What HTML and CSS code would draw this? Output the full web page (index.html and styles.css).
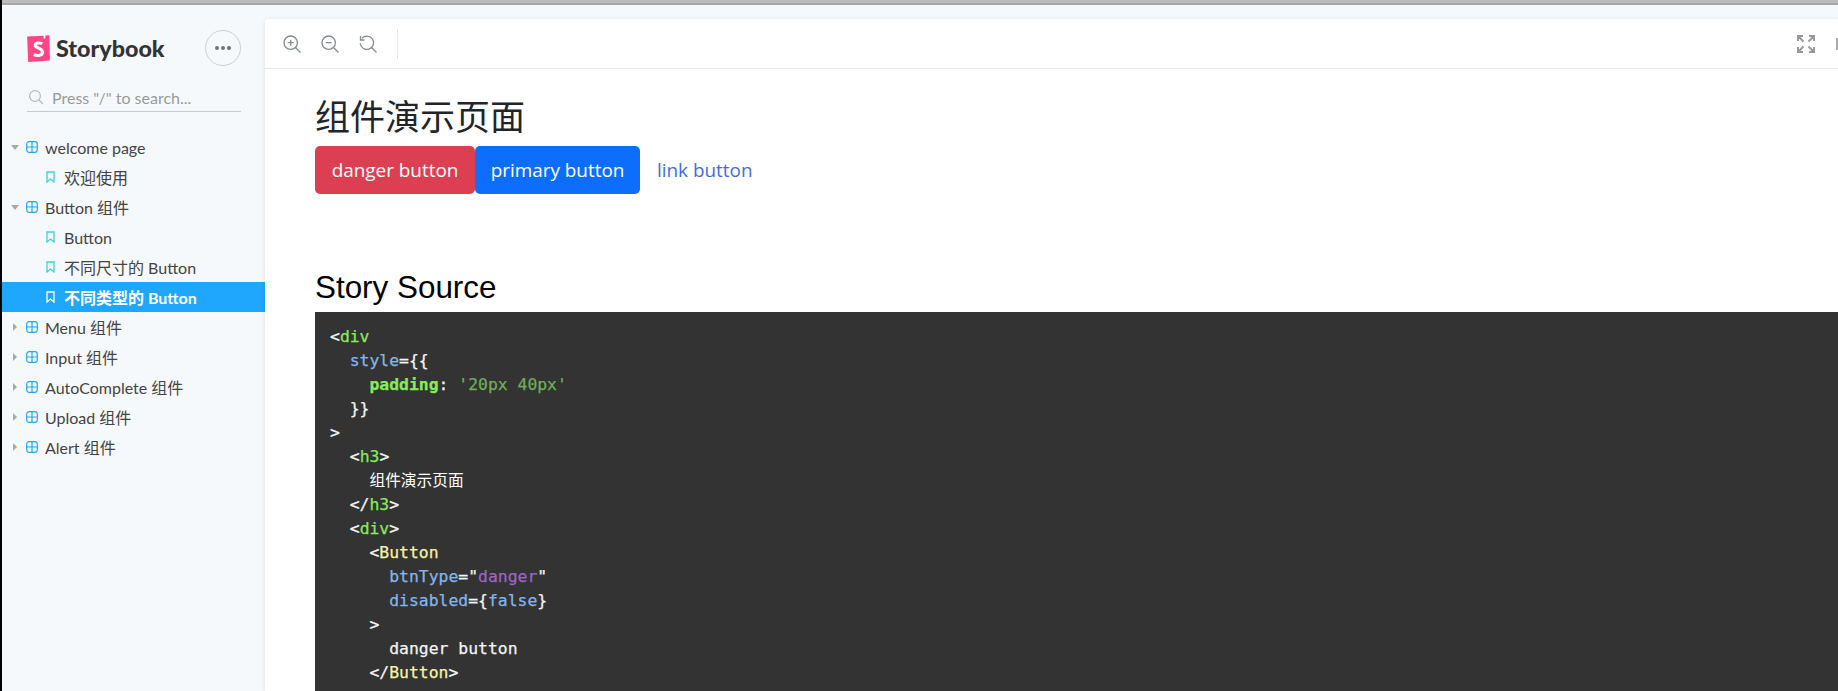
FILE: index.html
```html
<!DOCTYPE html>
<html lang="zh">
<head>
<meta charset="utf-8">
<title>Storybook</title>
<link rel="stylesheet" href="styles.css">
</head>
<body>
<div class="topbar"></div>
<div class="app">
  <aside class="sidebar">
    <div class="brand">
      <div class="logo">
        <svg class="logo-mark" width="24" height="28" viewBox="0 0 23 27"><path d="M1 2.5 17 1.600 16.800 4.400 18.500 4.300 18.700 1.500 22.500 1.300 23 25.600 2 27z" fill="#ff4785"/><path d="M15.500 9.500C14 8.300 8.800 8 8.800 10.800 8.800 14 15.800 13 15.800 17.600 15.800 21.200 10 21.400 7.500 19.800" fill="none" stroke="#fff" stroke-width="3"/></svg>
        <span class="logo-text">Storybook</span>
      </div>
      <div class="more"><i></i><i></i><i></i></div>
    </div>
    <div class="search">
      <svg width="16" height="16" viewBox="0 0 16 16" fill="none" stroke="#b4b9bd" stroke-width="1.200"><circle cx="7" cy="7" r="5.400"/><path d="m11 11 4 4"/></svg>
      <span>Press "/" to search...</span>
    </div>
    <nav class="tree">
      <div class="row"><b class="caret open"></b><svg class="grid" viewBox="0 0 12 12"><rect x=".7" y=".7" width="10.600" height="10.600" rx="2.500"/><path d="M6 .7v10.600M.7 6h10.600"/></svg><span>welcome page</span></div>
      <div class="row leaf"><svg class="mark" viewBox="0 0 9 12"><path d="M1 1h7v10L4.500 8 1 11z"/></svg><span>欢迎使用</span></div>
      <div class="row"><b class="caret open"></b><svg class="grid" viewBox="0 0 12 12"><rect x=".7" y=".7" width="10.600" height="10.600" rx="2.500"/><path d="M6 .7v10.600M.7 6h10.600"/></svg><span>Button 组件</span></div>
      <div class="row leaf"><svg class="mark" viewBox="0 0 9 12"><path d="M1 1h7v10L4.500 8 1 11z"/></svg><span>Button</span></div>
      <div class="row leaf"><svg class="mark" viewBox="0 0 9 12"><path d="M1 1h7v10L4.500 8 1 11z"/></svg><span>不同尺寸的 Button</span></div>
      <div class="row leaf selected"><svg class="mark" viewBox="0 0 9 12"><path d="M1 1h7v10L4.500 8 1 11z"/></svg><span>不同类型的 Button</span></div>
      <div class="row"><b class="caret"></b><svg class="grid" viewBox="0 0 12 12"><rect x=".7" y=".7" width="10.600" height="10.600" rx="2.500"/><path d="M6 .7v10.600M.7 6h10.600"/></svg><span>Menu 组件</span></div>
      <div class="row"><b class="caret"></b><svg class="grid" viewBox="0 0 12 12"><rect x=".7" y=".7" width="10.600" height="10.600" rx="2.500"/><path d="M6 .7v10.600M.7 6h10.600"/></svg><span>Input 组件</span></div>
      <div class="row"><b class="caret"></b><svg class="grid" viewBox="0 0 12 12"><rect x=".7" y=".7" width="10.600" height="10.600" rx="2.500"/><path d="M6 .7v10.600M.7 6h10.600"/></svg><span>AutoComplete 组件</span></div>
      <div class="row"><b class="caret"></b><svg class="grid" viewBox="0 0 12 12"><rect x=".7" y=".7" width="10.600" height="10.600" rx="2.500"/><path d="M6 .7v10.600M.7 6h10.600"/></svg><span>Upload 组件</span></div>
      <div class="row"><b class="caret"></b><svg class="grid" viewBox="0 0 12 12"><rect x=".7" y=".7" width="10.600" height="10.600" rx="2.500"/><path d="M6 .7v10.600M.7 6h10.600"/></svg><span>Alert 组件</span></div>
    </nav>
  </aside>
  <main class="panel">
    <div class="toolbar">
      <svg class="tool" viewBox="0 0 18 18"><circle cx="7.700" cy="7.700" r="6.700"/><path d="m12.500 12.500 5 5M7.700 4.700v6M4.700 7.700h6"/></svg>
      <svg class="tool" viewBox="0 0 18 18"><circle cx="7.700" cy="7.700" r="6.700"/><path d="m12.500 12.500 5 5M4.700 7.700h6"/></svg>
      <svg class="tool" viewBox="0 0 18 18"><path d="M3 3.200a6.700 6.700 0 1 1-1.800 5"/><path d="M1.500 1v4h4M12.500 12.500l5 5"/></svg>
      <div class="divider"></div>
      <div class="tool-right">
        <svg class="expand" viewBox="0 0 18 18"><path d="M1 6V1h5M12 1h5v5M17 12v5h-5M6 17H1v-5M1.500 1.500l5 5M16.500 1.500l-5 5M16.500 16.500l-5-5M1.500 16.500l5-5"/></svg>
        <div class="cut"></div>
      </div>
    </div>
    <div class="story">
      <h3 class="title">组件演示页面</h3>
      <div class="buttons">
        <button class="btn danger">danger button</button><button class="btn primary">primary button</button><a class="btn link">link button</a>
      </div>
      <h2 class="source-title">Story Source</h2>
<pre class="code"><span class="p">&lt;</span><span class="g">div</span>
  <span class="a">style</span><span class="p">={{</span>
    <span class="g b">padding</span><span class="p">:</span> <span class="s">'20px 40px'</span>
  <span class="p">}}</span>
<span class="p">&gt;</span>
  <span class="p">&lt;</span><span class="g">h3</span><span class="p">&gt;</span>
    <span class="c">组件演示页面</span>
  <span class="p">&lt;/</span><span class="g">h3</span><span class="p">&gt;</span>
  <span class="p">&lt;</span><span class="g">div</span><span class="p">&gt;</span>
    <span class="p">&lt;</span><span class="y">Button</span>
      <span class="a">btnType</span><span class="p">="</span><span class="v">danger</span><span class="p">"</span>
      <span class="a">disabled</span><span class="p">={</span><span class="a">false</span><span class="p">}</span>
    <span class="p">&gt;</span>
      <span class="p">danger button</span>
    <span class="p">&lt;/</span><span class="y">Button</span><span class="p">&gt;</span></pre>
    </div>
  </main>
</div>
</body>
</html>
```
FILE: styles.css
```css
* { box-sizing: border-box; }
html, body { margin: 0; height: 100%; overflow: hidden; }
body { background: #f6f9fc; font-family: Lato, "Noto Sans CJK SC", sans-serif; border-left: 2px solid #000; }
.topbar { height: 5px; background: #bdbdbd; border-bottom: 2px solid #a6a6a6; margin-left: -2px; }
.app { display: flex; height: 686px; }

.sidebar { width: 263px; flex: none; padding-top: 25px; }
.brand { display: flex; align-items: center; justify-content: space-between; height: 36px; padding: 0 24px 0 24px; }
.logo { display: flex; align-items: center; gap: 6px; }
.logo-mark { display: block; }
.logo-text { font-family: Lato, sans-serif; font-weight: 900; font-size: 23.300px; color: #333; }
.more { width: 36px; height: 36px; border: 1px solid #c9cfd4; border-radius: 50%; display: flex; align-items: center; justify-content: center; gap: 2px; }
.more i { width: 4px; height: 4px; background: #6f7477; border-radius: 50%; }

.search { display: flex; align-items: center; gap: 8px; height: 32px; margin: 14px 24px 0 25px; padding: 3px 0 0 1px; border-bottom: 1px solid #c6cacd; font-size: 16px; color: #999; white-space: nowrap; }

.tree { margin-top: 20px; }
.row { height: 30px; display: flex; align-items: center; font-size: 16px; color: #444; white-space: nowrap; padding-left: 9px; }
.row.leaf { padding-left: 44px; }
.caret { border-left: 4px solid #a8a8a8; border-top: 4px solid transparent; border-bottom: 4px solid transparent; width: 0; height: 8px; margin: 0 9px 0 2px; display: block; flex: none; }
.caret.open { border-left: 4px solid transparent; border-right: 4px solid transparent; border-top: 5px solid #a8a8a8; border-bottom: 0; width: 8px; height: 5px; margin: 0 7px 0 0; }
.grid { width: 12px; height: 12px; flex: none; margin-right: 7px; fill: none; stroke: #1ea7fd; stroke-width: 1.200; }
.mark { width: 9px; height: 12px; flex: none; margin-right: 9px; fill: none; stroke: #37d5d3; stroke-width: 1.300; }
.selected { background: #1ea7fd; color: #fff; font-weight: 700; }
.selected .mark { stroke: #fff; }

.panel { flex: 1; min-width: 0; height: 672px; margin-top: 14px; background: #fff; border-radius: 4px 0 0 0; box-shadow: 0 1px 5px rgba(0,0,0,.1); overflow: hidden; }
.toolbar { height: 50px; display: flex; align-items: center; gap: 20px; padding-left: 18px; border-bottom: 1px solid #e4e7ea; }
.tool { width: 18px; height: 18px; flex: none; fill: none; stroke: #858b8f; stroke-width: 1.300; }
.divider { width: 1px; height: 30px; background: #e4e7ea; }
.tool-right { margin-left: auto; display: flex; align-items: center; gap: 21px; margin-right: -4px; }
.expand { width: 18px; height: 18px; fill: none; stroke: #999; stroke-width: 2; }
.cut { width: 6px; height: 12px; background: #aaa; }

.story { padding: 28px 0 0 50px; }
.title { margin: 0; font-size: 35px; font-weight: 400; line-height: 42px; height: 46px; color: #212529; font-family: "Liberation Sans", "Noto Sans CJK SC", sans-serif; }
.buttons { display: flex; align-items: stretch; height: 48px; margin-top: 3px; }
.btn { display: flex; align-items: center; justify-content: center; border: 0; border-radius: 5px; font-family: "Open Sans", sans-serif; font-size: 18.900px; padding: 0; color: #fff; }
.danger { width: 160px; background: #dc3f52; }
.primary { width: 165px; background: #0d6efd; }
.link { color: #3f6fd8; margin-left: 17px; }
.source-title { margin: 76px 0 0; font-family: "Liberation Sans", sans-serif; font-weight: 400; font-size: 31.400px; line-height: 36px; color: #000; }
.code { margin: 6px 0 0; background: #333; padding: 13px 15px; font-family: "DejaVu Sans Mono", "Noto Sans CJK SC", monospace; font-size: 16.400px; line-height: 24px; color: #fff; height: 500px; -webkit-text-stroke: .25px; }
.p { color: #f4f4f4; }
.g { color: #86ec5a; }
.b { font-weight: 700; }
.a { color: #83b6ea; }
.s { color: #6fae5b; }
.y { color: #f7f3a6; }
.v { color: #9f66c4; }
.c { color: #fff; font-size: 15.700px; -webkit-text-stroke: 0; }
```
